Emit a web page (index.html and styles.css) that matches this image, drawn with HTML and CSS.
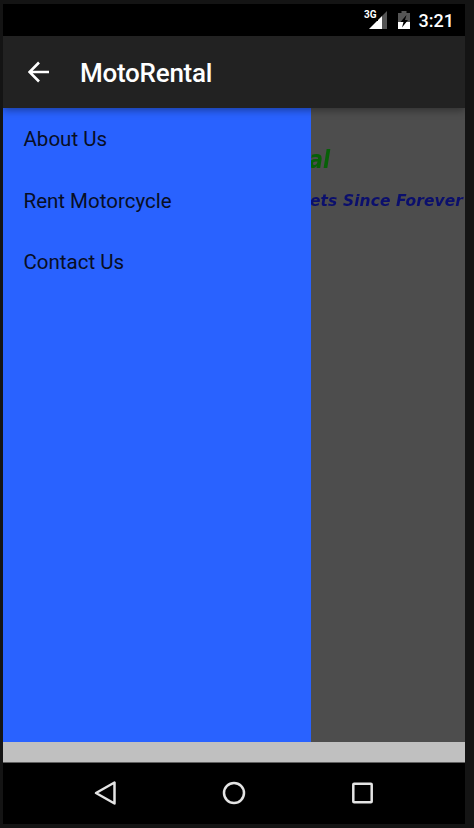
FILE: index.html
```
<!DOCTYPE html>
<html lang="en">
<head>
<meta charset="utf-8">
<title>MotoRental</title>
<link rel="stylesheet" href="styles.css">
</head>
<body>
<div class="phone">
  <div class="status">
    <svg class="signal" width="18" height="19" viewBox="0 0 18 19">
      <path d="M13 5l5-5v18h-5z" fill="#555"/>
      <path d="M0 18L13 5v13z" fill="#fff"/>
    </svg>
    <span class="network">3G</span>
    <svg class="battery" width="12" height="18" viewBox="0 0 12 18">
      <path d="M3.500 0h5v2H12v16H0V2h3.500z" fill="#555"/>
      <path d="M0 11h12v7H0z" fill="#fff"/>
      <path d="M8.500 4L2.500 11h3l-1.500 5.500L10 9H7z" fill="#000"/>
    </svg>
    <span class="time">3:21</span>
  </div>
  <header class="appbar">
    <svg class="back" width="22" height="22" viewBox="0 0 22 22"><path d="M21 11H2M11 1.500L1.500 11l9.500 9.500"/></svg>
    <h1 class="title">MotoRental</h1>
  </header>
  <main class="content">
    <nav class="drawer">
      <a class="item">About Us</a>
      <a class="item">Rent Motorcycle</a>
      <a class="item">Contact Us</a>
    </nav>
    <section class="page">
      <svg class="banner" width="154" height="120" viewBox="0 0 154 120">
        <text class="brand" x="-2" y="60" textLength="21" lengthAdjust="spacingAndGlyphs">al</text>
        <text class="slogan" x="-1" y="98" textLength="153">ets Since Forever</text>
      </svg>
    </section>
  </main>
  <div class="strip"></div>
  <footer class="navbar">
    <svg width="24" height="26" viewBox="0 0 24 26"><path d="M20.500 2.500v21L2 13z"/></svg>
    <svg width="24" height="26" viewBox="0 0 24 26"><circle cx="12" cy="13" r="10"/></svg>
    <svg width="24" height="26" viewBox="0 0 24 26"><rect x="2.300" y="3.800" width="18.400" height="18.400" rx=".8"/></svg>
  </footer>
</div>
</body>
</html>
```
FILE: styles.css
```
* { box-sizing: border-box; }
body {
  margin: 0;
  height: 828px;
  padding: 4px 9px 4px 3px;
  background: #141414;
  font-family: Roboto, "Liberation Sans", sans-serif;
  overflow: hidden;
}
.phone {
  width: 462px;
  height: 820px;
  display: flex;
  flex-direction: column;
  background: #000;
}
.status {
  position: relative;
  height: 32px;
  display: flex;
  justify-content: flex-end;
  align-items: center;
  padding-right: 11px;
  color: #fff;
}
.signal { margin-right: 11px; }
.network {
  position: absolute;
  left: 361px;
  top: 5px;
  padding-right: 1px;
  background: #000;
  font-size: 10px;
  line-height: 12px;
  font-weight: 700;
}
.battery { margin-right: 9px; }
.time { font-size: 18px; line-height: 32px; font-weight: 500; padding-top: 2px; }
.appbar {
  position: relative;
  z-index: 1;
  height: 72px;
  display: flex;
  align-items: center;
  padding-left: 25px;
  background: #222;
  box-shadow: 0 2px 8px rgba(0, 0, 0, .4);
  clip-path: inset(0 0 -16px 0);
}
.back { fill: none; stroke: #fff; stroke-width: 2.6; margin-bottom: 1px; }
.title {
  margin: 2px 0 0 30px;
  font-size: 26px;
  line-height: 32px;
  font-weight: 500;
  letter-spacing: -.25px;
  color: #fff;
}
.content { height: 634px; display: flex; }
.drawer {
  width: 308px;
  background: #2962ff;
  display: flex;
  flex-direction: column;
}
.item {
  height: 61.500px;
  line-height: 62px;
  padding-left: 20.500px;
  font-size: 20.500px;
  color: #080e24;
}
.page { width: 154px; background: #4d4d4d; overflow: hidden; }
.banner { display: block; overflow: hidden; }
.brand, .slogan {
  font-family: "DejaVu Sans", sans-serif;
  font-style: italic;
  font-weight: 700;
  filter: blur(.6px);
}
.brand { font-size: 24px; fill: #076007; }
.slogan { font-size: 15.500px; fill: #0b0f6c; }
.strip { height: 21px; background: #c0c0c0; border-bottom: 1px solid #606060; }
.navbar {
  height: 60px;
  display: flex;
  justify-content: center;
  align-items: center;
  gap: 104.500px;
}
.navbar svg { fill: none; stroke: #e4e4e4; stroke-width: 2.5; stroke-linejoin: round; }
```
